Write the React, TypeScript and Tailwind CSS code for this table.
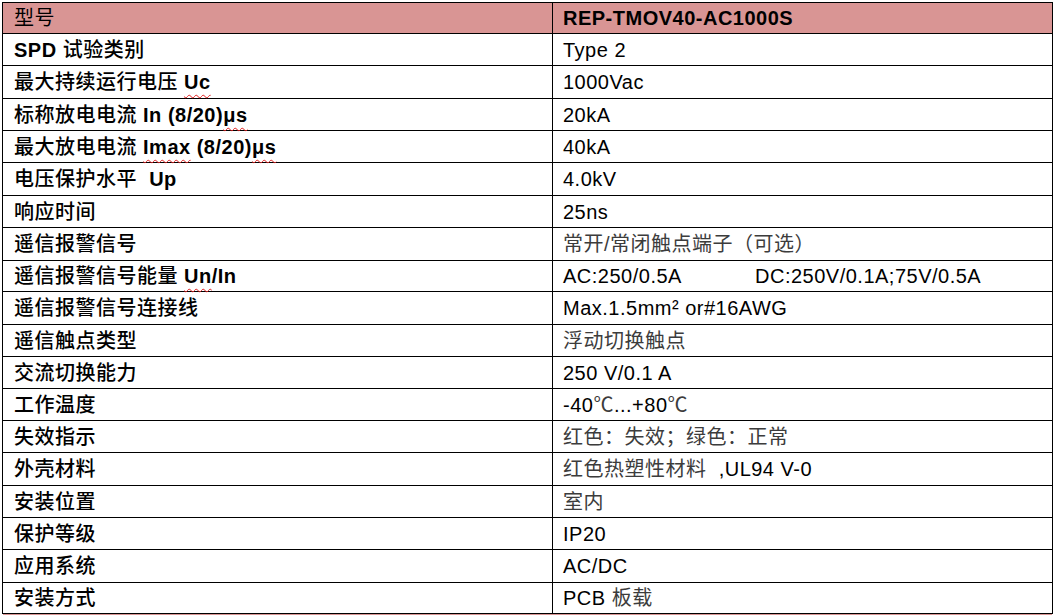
import type { ReactNode } from 'react'

const PINK = 'bg-[#D99594]'

// wavy red spell-check mark, like the word processor shows
function Sq({ children }: { children: ReactNode }) {
  return (
    <span className="underline decoration-wavy decoration-[#e02020] decoration-1 underline-offset-[5px]">
      {children}
    </span>
  )
}

function Zh({ children }: { children: ReactNode }) {
  return <span className="font-medium">{children}</span>
}

function Gray({ children }: { children: ReactNode }) {
  return <span className="text-[#3c3c3c]">{children}</span>
}

interface Row {
  h: string
  label: ReactNode
  value: ReactNode
}

const rows: Row[] = [
  {
    h: 'h-[32px]',
    label: <><b>SPD</b> <Zh>试验类别</Zh></>,
    value: 'Type 2',
  },
  {
    h: 'h-[33px]',
    label: <><Zh>最大持续运行电压</Zh> <b><Sq>Uc</Sq></b></>,
    value: '1000Vac',
  },
  {
    h: 'h-[32px]',
    label: <><Zh>标称放电电流</Zh> <b>In (8/20)<Sq>μs</Sq></b></>,
    value: '20kA',
  },
  {
    h: 'h-[32px]',
    label: <><Zh>最大放电电流</Zh> <b><Sq>Imax</Sq> (8/20)<Sq>μs</Sq></b></>,
    value: '40kA',
  },
  {
    h: 'h-[33px]',
    label: <><Zh>电压保护水平</Zh>&nbsp; <b>Up</b></>,
    value: '4.0kV',
  },
  {
    h: 'h-[32px]',
    label: <Zh>响应时间</Zh>,
    value: '25ns',
  },
  {
    h: 'h-[33px]',
    label: <Zh>遥信报警信号</Zh>,
    value: <Gray>常开/常闭触点端子（可选）</Gray>,
  },
  {
    h: 'h-[31px]',
    label: <><Zh>遥信报警信号能量</Zh> <b><Sq>Un</Sq>/In</b></>,
    value: (
      <>
        <span className="inline-block w-[192px]">AC:250/0.5A</span>
        <span>DC:250V/0.1A;75V/0.5A</span>
      </>
    ),
  },
  {
    h: 'h-[33px]',
    label: <Zh>遥信报警信号连接线</Zh>,
    value: 'Max.1.5mm² or#16AWG',
  },
  {
    h: 'h-[32px]',
    label: <Zh>遥信触点类型</Zh>,
    value: <Gray>浮动切换触点</Gray>,
  },
  {
    h: 'h-[32px]',
    label: <Zh>交流切换能力</Zh>,
    value: '250 V/0.1 A',
  },
  {
    h: 'h-[32px]',
    label: <Zh>工作温度</Zh>,
    value: <>-40<Gray>℃</Gray>...+80<Gray>℃</Gray></>,
  },
  {
    h: 'h-[32px]',
    label: <Zh>失效指示</Zh>,
    value: <Gray>红色：失效；绿色：正常</Gray>,
  },
  {
    h: 'h-[33px]',
    label: <Zh>外壳材料</Zh>,
    value: <><Gray>红色热塑性材料</Gray>{'  '},UL94 V-0</>,
  },
  {
    h: 'h-[32px]',
    label: <Zh>安装位置</Zh>,
    value: <Gray>室内</Gray>,
  },
  {
    h: 'h-[32px]',
    label: <Zh>保护等级</Zh>,
    value: 'IP20',
  },
  {
    h: 'h-[33px]',
    label: <Zh>应用系统</Zh>,
    value: 'AC/DC',
  },
  {
    h: 'h-[31px]',
    label: <Zh>安装方式</Zh>,
    value: <>PCB <Gray>板载</Gray></>,
  },
]

export default function App() {
  return (
    <div className="h-[615px] w-[1055px] overflow-hidden bg-white pl-[2px] pt-[2px] font-['Liberation_Sans','Noto_Sans_CJK_SC',sans-serif] text-[20px] leading-none tracking-[0.5px] text-black">
      <div className="w-[1051px] border-x border-t border-black">
        <div className={`flex h-[31px] border-b border-black ${PINK}`}>
          <div className="flex w-[550px] items-center border-r border-black pl-[11px]">
            <span>型号</span>
          </div>
          <div className="flex flex-1 items-center pl-[10px] font-bold">REP-TMOV40-AC1000S</div>
        </div>
        {rows.map((r, i) => (
          <div key={i} className={`flex border-b border-black ${r.h}`}>
            <div className="flex w-[550px] items-center whitespace-pre border-r border-black pl-[11px]">
              <span>{r.label}</span>
            </div>
            <div className="flex flex-1 items-center whitespace-pre pl-[10px]">
              <span>{r.value}</span>
            </div>
          </div>
        ))}
      </div>
      <div className={`ml-px h-[2px] w-[1049px] ${PINK}`} />
    </div>
  )
}
